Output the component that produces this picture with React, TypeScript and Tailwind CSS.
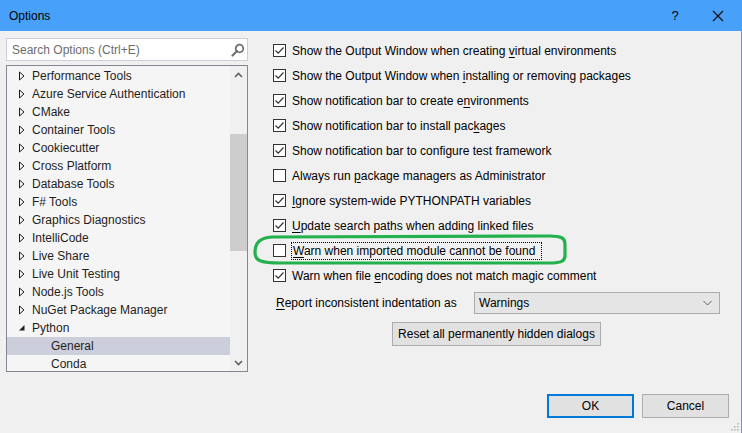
import React from "react";

const font = { fontFamily: '"Liberation Sans", Arial, sans-serif' };

function Check({ checked }: { checked: boolean }) {
  return (
    <div className="w-[13px] h-[13px] border border-[#333333] bg-white flex items-center justify-center shrink-0">
      {checked && (
        <svg width="11" height="11" viewBox="0 0 11 11">
          <path d="M1.5 5.5 L4.2 8.2 L9.5 2.5" fill="none" stroke="#333333" strokeWidth="1.2" />
        </svg>
      )}
    </div>
  );
}

function U({ children }: { children: React.ReactNode }) {
  return <span className="underline underline-offset-[2px]">{children}</span>;
}

function Row({ checked, children }: { checked: boolean; children: React.ReactNode }) {
  return (
    <div className="h-[25px] flex items-center gap-[6px]">
      <Check checked={checked} />
      <div className="text-[12px] text-black whitespace-nowrap">{children}</div>
    </div>
  );
}

function Arrow({ open }: { open?: boolean }) {
  if (open)
    return (
      <svg width="8" height="8" viewBox="0 0 8 8" className="shrink-0">
        <path d="M6.5 1 L6.5 6.5 L1 6.5 Z" fill="#1e1e1e" />
      </svg>
    );
  return (
    <svg width="8" height="10" viewBox="0 0 8 10" className="shrink-0">
      <path d="M1.5 1 L6 5 L1.5 9 Z" fill="none" stroke="#1e1e1e" strokeWidth="1" />
    </svg>
  );
}

const treeItems = [
  "Performance Tools",
  "Azure Service Authentication",
  "CMake",
  "Container Tools",
  "Cookiecutter",
  "Cross Platform",
  "Database Tools",
  "F# Tools",
  "Graphics Diagnostics",
  "IntelliCode",
  "Live Share",
  "Live Unit Testing",
  "Node.js Tools",
  "NuGet Package Manager",
];

export default function App() {
  return (
    <div className="w-[742px] h-[433px] bg-[#f0f0f0] flex flex-col relative overflow-hidden border-r border-[#47a1fa]" style={font}>
      {/* Title bar */}
      <div className="h-[31px] bg-[#47a1fa] flex items-center shrink-0">
        <div className="pl-[9px] text-[12px] text-black flex-1">Options</div>
        <div className="w-[30px] text-center text-[13px] text-black mr-[22px]">?</div>
        <svg width="12" height="12" viewBox="0 0 12 12" className="mr-[17px]">
          <path d="M1 1 L11 11 M11 1 L1 11" stroke="#111" strokeWidth="1.2" />
        </svg>
      </div>

      {/* Main */}
      <div className="flex h-[352px] shrink-0">
        {/* Left */}
        <div className="w-[248px] pl-[6px] pt-[7px] flex flex-col gap-[4px] shrink-0">
          <div className="h-[23px] border border-[#cccedb] bg-white flex items-center pl-[5px] pr-[2px]">
            <span className="flex-1 text-[12px] text-[#6d6d6d]">Search Options (Ctrl+E)</span>
            <svg width="14" height="14" viewBox="0 0 14 14">
              <circle cx="8.5" cy="5.5" r="3.8" fill="none" stroke="#6e6e6e" strokeWidth="1.8" />
              <path d="M6 8 L1.5 12.5" stroke="#6e6e6e" strokeWidth="2.2" strokeLinecap="round" />
            </svg>
          </div>
          <div className="h-[307px] border border-[#828790] bg-[#f5f5f5] flex">
            <div className="flex-1 flex flex-col pt-[1px] overflow-hidden">
              {treeItems.map((t) => (
                <div key={t} className="h-[18px] shrink-0 flex items-center pl-[11px] gap-[6px] text-[12px] text-[#1e1e1e]">
                  <Arrow />
                  <span>{t}</span>
                </div>
              ))}
              <div className="h-[18px] shrink-0 flex items-center pl-[11px] gap-[6px] text-[12px] text-[#1e1e1e]">
                <Arrow open />
                <span>Python</span>
              </div>
              <div className="h-[18px] shrink-0 flex items-center pl-[44px] text-[12px] text-[#1e1e1e] bg-[#cccedb]">General</div>
              <div className="h-[18px] shrink-0 flex items-center pl-[44px] text-[12px] text-[#1e1e1e]">Conda</div>
            </div>
            <div className="w-[17px] bg-[#f0f0f0] flex flex-col items-center">
              <div className="h-[17px] flex items-center justify-center">
                <svg width="9" height="6" viewBox="0 0 9 6">
                  <path d="M1 5 L4.5 1.5 L8 5" fill="none" stroke="#606060" strokeWidth="1.6" />
                </svg>
              </div>
              <div className="h-[51px]" />
              <div className="w-[17px] h-[117px] bg-[#cdcdcd]" />
              <div className="flex-1" />
              <div className="h-[17px] flex items-center justify-center">
                <svg width="9" height="6" viewBox="0 0 9 6">
                  <path d="M1 1 L4.5 4.5 L8 1" fill="none" stroke="#606060" strokeWidth="1.6" />
                </svg>
              </div>
            </div>
          </div>
        </div>

        {/* Right */}
        <div className="flex-1 pl-[25px] pt-[7px] flex flex-col">
          <Row checked>Show the Output Window when creating <U>v</U>irtual environments</Row>
          <Row checked>Show the Output Window when <U>i</U>nstalling or removing packages</Row>
          <Row checked>Show notification bar to create e<U>n</U>vironments</Row>
          <Row checked>Show notification bar to install pac<U>k</U>ages</Row>
          <Row checked>Show notification bar to configure test framework</Row>
          <Row checked={false}>Always run <U>p</U>ackage managers as Administrator</Row>
          <Row checked><U>I</U>gnore system-wide PYTHONPATH variables</Row>
          <Row checked><U>U</U>pdate search paths when adding linked files</Row>
          <div className="h-[25px] flex items-center gap-[5px]">
            <Check checked={false} />
            <div className="text-[12px] text-black whitespace-nowrap border border-dotted border-black h-[18px] w-[251px] flex items-center pl-[1px]">
              <span><U>W</U>arn when imported module cannot be found</span>
            </div>
          </div>
          <Row checked>Warn when file <U>e</U>ncoding does not match magic comment</Row>
          <div className="flex items-center mt-[4px] h-[22px]">
            <span className="text-[12px] text-black pl-[3px] w-[201px]"><U>R</U>eport inconsistent indentation as</span>
            <div className="w-[246px] h-[22px] border border-[#acacac] bg-[#e5e5e5] flex items-center pl-[4px] pr-[7px]">
              <span className="flex-1 text-[12px] text-black">Warnings</span>
              <svg width="9" height="6" viewBox="0 0 9 6">
                <path d="M0.5 1 L4.5 5 L8.5 1" fill="none" stroke="#606060" strokeWidth="1" />
              </svg>
            </div>
          </div>
          <div className="flex mt-[8px] pl-[119px]">
            <div className="h-[24px] w-[209px] border border-[#adadad] bg-[#e1e1e1] flex items-center justify-center text-[12px] text-black">
              Reset all permanently hidden dialogs
            </div>
          </div>
        </div>
      </div>

      {/* Footer */}
      <div className="flex justify-end gap-[8px] pr-[12px] mt-[11px]">
        <div className="w-[87px] h-[24px] border-2 border-[#0078d7] bg-[#e1e1e1] flex items-center justify-center text-[12px] text-black">OK</div>
        <div className="w-[87px] h-[24px] border border-[#adadad] bg-[#e1e1e1] flex items-center justify-center text-[12px] text-black">Cancel</div>
      </div>

      {/* Size grip */}
      <svg width="10" height="10" viewBox="0 0 10 10" className="absolute right-[2px] bottom-[2px]">
        {[[8, 2], [8, 5], [5, 5], [8, 8], [5, 8], [2, 8]].map(([x, y], i) => (
          <rect key={i} x={x} y={y} width="1.5" height="1.5" fill="#b0b0b0" />
        ))}
      </svg>

      {/* Green annotation */}
      <svg width="330" height="36" viewBox="0 0 330 36" className="absolute left-[250px] top-[232px] pointer-events-none">
        <path
          d="M22 5 L300 4 C311 4 315 6 315 12 L315 24 C315 29 311 31 300 31 L30 31 C12 31 5 29 5 21 C5 10 10 6 22 5 Z"
          fill="none"
          stroke="#22b14c"
          strokeWidth="3.2"
        />
      </svg>
    </div>
  );
}
